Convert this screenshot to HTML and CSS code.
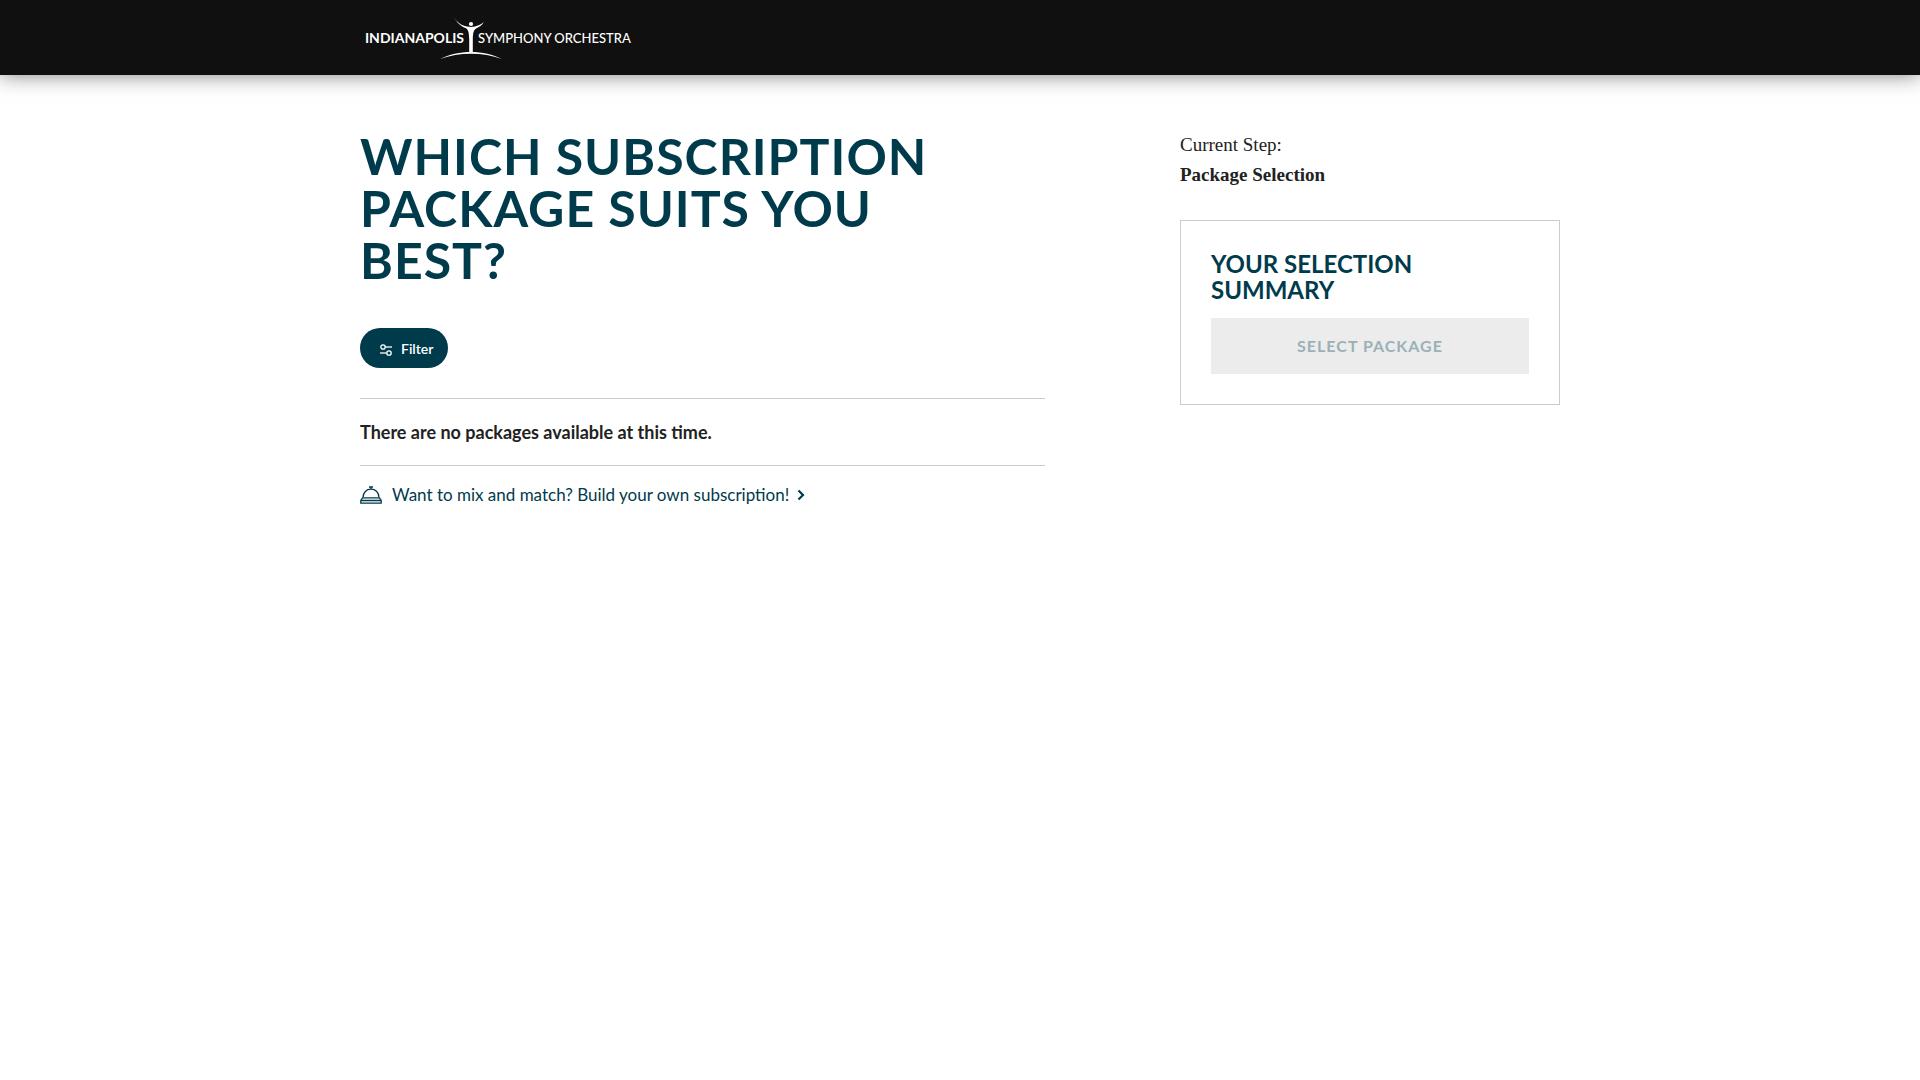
FILE: index.html
```
<!DOCTYPE html>
<html lang="en">
<head>
<meta charset="UTF-8">
<meta name="viewport" content="width=device-width, initial-scale=1.0">
<title>Subscriptions | Indianapolis Symphony Orchestra</title>
<link rel="stylesheet" href="styles.css">
</head>
<body>
    <header class="site-header">
        <div class="container">
            <a class="logo" href="#" aria-label="Indianapolis Symphony Orchestra">
                <svg width="280" height="75" viewBox="0 0 280 75" fill="#fff">
                    <text class="logo-bold" x="104" y="43" text-anchor="end">INDIANAPOLIS</text>
                    <text class="logo-text" x="118" y="43">SYMPHONY ORCHESTRA</text>
                    <!-- conductor -->
                    <circle cx="111" cy="24" r="2.1"/>
                    <path d="M94 17.500 C97 22 101 25.500 107 26.500 Q111 27.400 115 26.500 C119 25.500 122 24 124 21.800 C122 25.600 119 27.300 116.500 28.300 C113.500 30 113 33 112.800 39 L112.800 52.500 L109.200 52.500 L109.200 39 C109 33 108.500 30 106 28.200 C101 26.500 96.500 22 94 17.500 Z"/>
                    <path d="M80 59 C89 54.500 100 52 111 52 C122 52 133 54.500 142 59 C132 55.500 122 53.800 111 53.800 C100 53.800 90 55.500 80 59 Z"/>
                </svg>
            </a>
        </div>
    </header>

    <div class="container page">
        <main class="main">
            <h1>Which subscription package suits you best?</h1>
            <button type="button" class="filter-btn">
                <svg width="12" height="12" viewBox="0 0 12 12" fill="none" stroke="currentColor" stroke-width="1.300">
                    <circle cx="3" cy="3" r="2.200"/>
                    <path d="M5.200 3 H12"/>
                    <circle cx="9" cy="9" r="2.200"/>
                    <path d="M0 9 H6.800"/>
                </svg>
                Filter
            </button>
            <p class="no-results">There are no packages available at this time.</p>
            <a class="build-link" href="#">
                <svg class="bell" width="22" height="18" viewBox="0 0 22 18" fill="none" stroke="currentColor" stroke-width="1.300">
                    <path d="M9 1 H13 M11 1 V3"/>
                    <path d="M3 11.500 C3 6.500 6.500 3.200 11 3.200 C15.500 3.200 19 6.500 19 11.500"/>
                    <path d="M2.500 11.800 H19.500 L21.200 14.500 V17.200 H0.800 V14.500 Z M1 14.500 H21"/>
                </svg>
                <span>Want to mix and match? Build your own subscription!</span>
                <svg class="chevron" width="8" height="12" viewBox="0 0 8 12" fill="none" stroke="currentColor" stroke-width="2.200">
                    <path d="M1.500 1.500 L6 6 L1.500 10.500"/>
                </svg>
            </a>
        </main>

        <aside class="sidebar">
            <p class="step">Current Step:<br><strong>Package Selection</strong></p>
            <div class="summary">
                <h2>Your Selection Summary</h2>
                <button type="button" class="select-btn" disabled>Select Package</button>
            </div>
        </aside>
    </div>
</body>
</html>
```
FILE: styles.css
```
* {
    box-sizing: border-box;
}
body {
    margin: 0;
    background: #fff;
    color: #222;
    font-family: Lato, "Open Sans", sans-serif;
    font-size: 18px;
}
.container {
    max-width: 1200px;
    margin: 0 auto;
}
.site-header {
    background: #101010;
    box-shadow: 0 0 20px rgba(0, 0, 0, 0.5);
}
.logo, .logo svg {
    display: block;
}
.logo {
    width: 280px;
}
.logo-bold {
    font-size: 14px;
    font-weight: 700;
}
.logo-text {
    font-size: 13px;
    font-weight: 500;
}
.page {
    display: flex;
    justify-content: space-between;
    padding-top: 55px;
}
.main {
    width: 57.1%;
}
h1, h2 {
    margin: 0;
    color: #003b4c;
    font-weight: 700;
    text-transform: uppercase;
}
h1 {
    max-width: 640px;
    padding-bottom: 42px;
    font-size: 50px;
    line-height: 52px;
    letter-spacing: 1px;
}
.filter-btn {
    display: flex;
    align-items: center;
    gap: 9px;
    height: 40px;
    padding: 0 15px 0 20px;
    border: 0;
    border-radius: 20px;
    background: #003b4c;
    color: #fff;
    font-family: inherit;
    font-size: 14px;
    font-weight: 600;
}
.filter-btn svg {
    margin-top: 4px;
}
.no-results {
    margin: 30px 0 0;
    padding: 20px 0;
    border-top: 1px solid #ccc;
    border-bottom: 1px solid #ccc;
    font-weight: 700;
    line-height: 26px;
}
.build-link {
    display: flex;
    align-items: center;
    margin-top: 16px;
    color: #003b4c;
    font-size: 17px;
    line-height: 26px;
    text-decoration: none;
}
.bell {
    margin-right: 10px;
}
.chevron {
    margin-left: 8px;
}
.sidebar {
    width: 380px;
}
.step {
    margin: 0 0 30px;
    font-family: "Liberation Serif", serif;
    font-size: 19px;
    line-height: 30px;
}
.summary {
    padding: 30px;
    border: 1px solid #ccc;
}
h2 {
    max-width: 240px;
    font-size: 24px;
    line-height: 26px;
}
.select-btn {
    width: 100%;
    height: 56px;
    margin-top: 15px;
    padding-bottom: 3px;
    border: 0;
    background: #ececec;
    color: #9bb0b7;
    font-family: inherit;
    font-size: 16px;
    font-weight: 700;
    letter-spacing: 1px;
    text-transform: uppercase;
}
```
